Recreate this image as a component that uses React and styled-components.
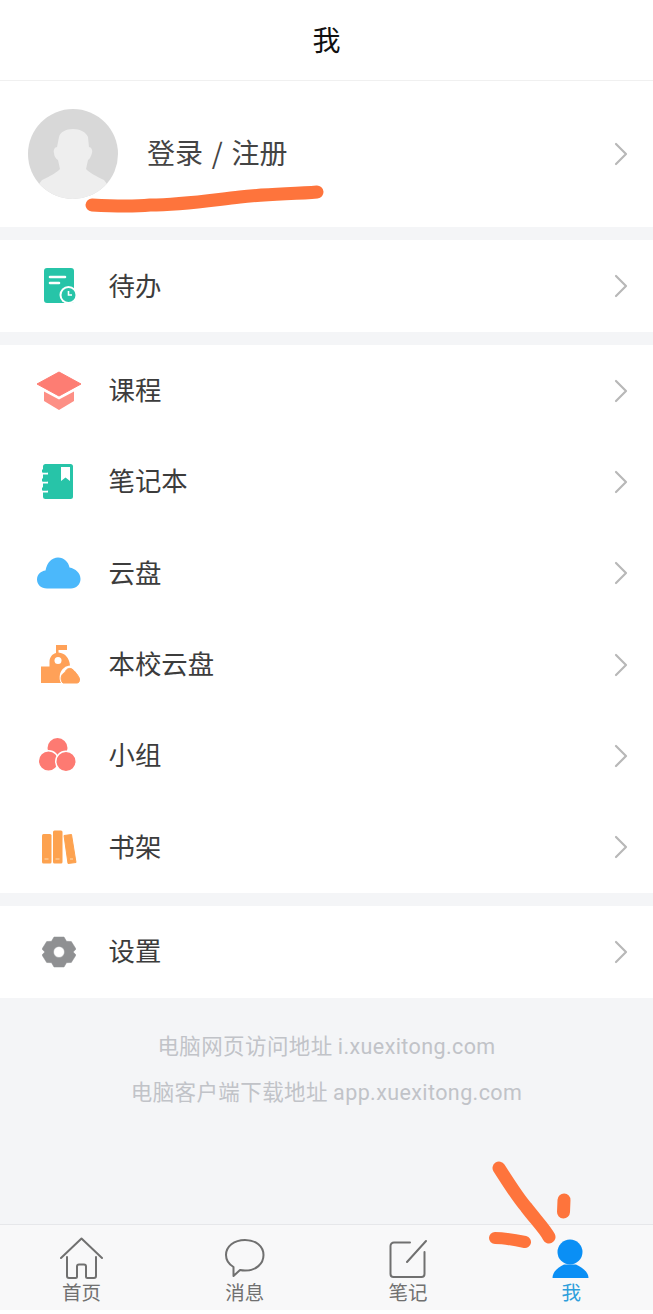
import React from 'react';
import styled, { createGlobalStyle } from 'styled-components';

const Global = createGlobalStyle`
  html, body { margin: 0; padding: 0; background: #fff; }
  body { font-family: "Liberation Sans", "Noto Sans CJK SC", sans-serif; }
`;
const Page = styled.div`
  position: relative; width: 653px; height: 1314px; overflow: hidden;
  display: flex; flex-direction: column; background: #f4f5f7;
`;
const Header = styled.header`
  height: 78px; flex: none; background: #fff; border-bottom: 1px solid #f0f0f0;
  display: flex; align-items: center; justify-content: center; padding-bottom: 2px;
  font-size: 28px; color: #111; font-family: "Noto Sans CJK SC", sans-serif;
`;
const Profile = styled.section`
  height: 146px; flex: none; background: #fff; display: flex; align-items: center;
  padding: 0 25px 0 28px; box-sizing: border-box;
`;
const Avatar = styled.svg`
  width: 90px; height: 90px; flex: none; margin-top: -1px;
`;
const LoginText = styled.span`
  margin-left: 29px; flex: 1; font-size: 28px; color: #444; word-spacing: 2.500px;
  font-family: "Noto Sans CJK SC", sans-serif; padding-bottom: 5px;
  white-space: pre;
`;
const Group = styled.section`
  background: #fff; margin-top: ${p => p.$gap}px; flex: none;
`;
const Row = styled.div`
  height: ${p => p.$h}px; display: flex; align-items: center; padding: 0 25px 0 36px; box-sizing: border-box;
`;
const IconBox = styled.span`
  width: 46px; height: 46px; flex: none; display: flex; align-items: center; justify-content: center;
  svg { display: block; }
`;
const Label = styled.span`
  margin-left: 26.500px; flex: 1; font-size: 26.400px; color: #3c3c3c; padding-bottom: 4px;
  font-family: "Noto Sans CJK SC", sans-serif;
`;
const Footer = styled.footer`
  flex: 1; display: flex; flex-direction: column; align-items: center; padding-top: 32px; gap: 15.500px;
`;
const FootLine = styled.div`
  font-size: 21.500px; line-height: 29px; color: #c1c3c8; letter-spacing: 0.400px;
  font-family: "Noto Sans CJK SC", "Liberation Sans", sans-serif;
  span { font-family: "Roboto", sans-serif; }
`;
const TabBar = styled.nav`
  height: 86px; flex: none; background: #f8f8f9; border-top: 1px solid #e6e7ea;
  display: grid; grid-template-columns: repeat(4, 163.250px); margin-bottom: 3px;
`;
const BottomEdge = styled.div`
  position: absolute; left: 0; right: 0; bottom: 0; height: 4px; background: #fff;
`;
const Tab = styled.div`
  display: flex; flex-direction: column; align-items: center; padding-top: 12px; height: 86px; box-sizing: border-box;
`;
const TabIcon = styled.svg` width: 44px; height: 44px; flex: none; display: block; `;
const TabLabel = styled.span`
  font-size: 19.500px; line-height: 24px; margin-top: -1px; color: ${p => p.$active ? '#2f9fdc' : '#707070'};
  font-family: "Noto Sans CJK SC", sans-serif;
`;
const Strokes = styled.svg`
  position: absolute; left: 0; top: 0; width: 653px; height: 1314px; pointer-events: none;
`;

const Chevron = () => (
  <svg width="14" height="24" viewBox="0 0 14 24" fill="none" stroke="#b8b8b8" strokeWidth="2.200" strokeLinecap="round" strokeLinejoin="round">
    <path d="M2 2 12 12 2 22" />
  </svg>
);

const Todo = () => (
  <svg width="34" height="36" viewBox="0 0 34 36" style={{ marginLeft: 4 }}>
    <rect x="0" y="0" width="30" height="35" rx="3" fill="#27c4a8" />
    <path d="M6 9h15M6 15h9" stroke="#fff" strokeWidth="2.600" strokeLinecap="round" />
    <circle cx="24.500" cy="27" r="9" fill="#fff" />
    <circle cx="24.500" cy="27" r="7" fill="#27c4a8" />
    <path d="M24.500 23v4h3.500" fill="none" stroke="#fff" strokeWidth="1.600" />
  </svg>
);
const Course = () => (
  <svg width="46" height="40" viewBox="0 0 46 40">
    <path d="M23 1 45 13 23 25 1 13Z" fill="#fd7d73" stroke="#fd7d73" strokeLinejoin="round" strokeWidth="1" />
    <path d="M8 20.500 23 28.500 38 20.500V30L23 39 8 30Z" fill="#fd8f85" />
  </svg>
);
const Notebook = () => (
  <svg width="32" height="36" viewBox="0 0 32 36" style={{ marginRight: 3 }}>
    <rect x="1" y="0" width="30" height="35" rx="2.500" fill="#27c4a8" />
    <path d="M0 9.500h6M0 18.500h6M0 27.500h6" stroke="#fff" strokeWidth="2.200" />
    <path d="M0 7h5M0 16h5M0 25h5" stroke="#27c4a8" strokeWidth="2.800" strokeLinecap="round" />
    <path d="M19 3h9v14l-4.500-3.500L19 17Z" fill="#fff" />
  </svg>
);
const Cloud = () => (
  <svg width="44" height="32" viewBox="0 0 44 32">
    <path d="M10 31.500C4 31.500 0 27.500 0 22.500 0 17.500 4 14 8.500 13.500 10 5.500 15 0.500 21 0.500 27 0.500 31.500 5 32.500 10.500 38.500 11.500 43.500 16 43.500 22 43.500 27.500 39 31.500 34 31.500Z" fill="#4bb8fb" />
  </svg>
);
const School = () => (
  <svg width="40" height="39" viewBox="0 0 40 39" style={{ marginLeft: 2 }}>
    <path d="M16 0h11v5H18.500V7.500C25 8 29.500 13 30 20.500 26 20.500 21.500 24 20 29 19.300 32 19.500 36 21 38H1V21.500H9.500V17C9.500 12.500 12 9 16 8Z" fill="#ffa158" />
    <circle cx="18" cy="15.500" r="3.500" fill="#fff" />
    <path d="M23 38C20 35.500 20.500 29 25 27.500 26 24 29 22.500 32 24 35 26 38.500 31 39.500 33.500 40 36.500 38.500 38 37 38Z" fill="#ffa158" stroke="#ffa158" strokeLinejoin="round" />
  </svg>
);
const Team = () => (
  <svg width="38" height="36" viewBox="0 0 38 36" style={{ marginRight: 2 }}>
    <circle cx="18.500" cy="10" r="10" fill="#fd7a72" />
    <circle cx="9.500" cy="23" r="10.250" fill="#fd7a72" stroke="#fff" strokeWidth="1.500" />
    <circle cx="27" cy="23.500" r="10.250" fill="#fd7a72" stroke="#fff" strokeWidth="1.500" />
  </svg>
);
const Shelf = () => (
  <svg width="36" height="34" viewBox="0 0 36 34">
    <rect x="1" y="4" width="9.500" height="29.500" rx="1.500" fill="#fda24f" />
    <rect x="12" y="0.500" width="9.500" height="33" rx="1.500" fill="#fda24f" />
    <path d="M23 5.500 30.500 4.500 35 32.500 27 33.500Z" fill="#fda24f" stroke="#fda24f" strokeLinejoin="round" />
    <path d="M3.500 29h4M14.500 29h4M29 29h3" stroke="#ffd9b0" strokeWidth="1.200" />
  </svg>
);
const Gear = () => (
  <svg width="34" height="32" viewBox="0 0 34 32">
    <path fillRule="evenodd" fill="#8f9092" d="M12 1h10l2.500 4.300 4.800 .2L34 13l-2.800 3 2.800 3-4.700 7.500-4.800 .2L22 31H12l-2.500-4.300-4.800-.2L0 19l2.800-3L0 13l4.700-7.500 4.800-.2Z M17 10.500a5.500 5.500 0 1 0 0 11 5.500 5.500 0 0 0 0-11Z" stroke="#8f9092" strokeWidth="0.500" strokeLinejoin="round" />
  </svg>
);

const groups = [
  { gap: 13, h: 92, items: [['待办', <Todo />]] },
  { gap: 13, h: 91.33, items: [['课程', <Course />], ['笔记本', <Notebook />], ['云盘', <Cloud />], ['本校云盘', <School />], ['小组', <Team />], ['书架', <Shelf />]] },
  { gap: 13, h: 92, items: [['设置', <Gear />]] },
];

const tabs = [
  ['首页', <path d="M1 21 21.500 1.500 42 21M7 20V39a2 2 0 0 0 2 2h6.500a1.500 1.500 0 0 0 1.500-1.500V29.500A2 2 0 0 1 19 27.500h5a2 2 0 0 1 2 2V39.500A1.500 1.500 0 0 0 27.500 41h6.500a2 2 0 0 0 2-2V20" />],
  ['消息', <path d="M22 3C33 3 40.500 9.500 40.500 18 40.500 27 33 33.500 22 33.500 20 33.500 18.500 33.300 17 33L10.500 39 10.500 30C5.500 27 3 23 3 18 3 9.500 11 3 22 3Z" />],
  ['笔记', <path d="M24 5.500H8A3.500 3.500 0 0 0 4.500 9V37A3 3 0 0 0 7.500 40H35.500A3 3 0 0 0 38.500 37V15M40 4 21 25" />],
];

export default function App() {
  return (
    <Page>
      <Global />
      <Header>我</Header>
      <Profile>
        <Avatar viewBox="0 0 90 90">
          <defs><clipPath id="av"><circle cx="45" cy="45" r="45" /></clipPath></defs>
          <circle cx="45" cy="45" r="45" fill="#d8d8d8" />
          <g clipPath="url(#av)" fill="#eeeeee">
            <path d="M31 28C32 23 38 20 45 20 52 20 58 23 60 28L61 38C63 38 65 41 64 44 63 47 62 50 60 51L58 60C61 63 67 67 76 71L90 90H0L14 71C23 67 29 63 32 60L30 51C28 50 26 47 26 44 25 41 27 38 29 38Z" />
          </g>
        </Avatar>
        <LoginText>登录 / 注册</LoginText>
        <Chevron />
      </Profile>
      {groups.map((g, i) => (
        <Group key={i} $gap={g.gap}>
          {g.items.map(([text, icon]) => (
            <Row key={text} $h={g.h}>
              <IconBox>{icon}</IconBox>
              <Label>{text}</Label>
              <Chevron />
            </Row>
          ))}
        </Group>
      ))}
      <Footer>
        <FootLine>电脑网页访问地址 <span>i.xuexitong.com</span></FootLine>
        <FootLine>电脑客户端下载地址 <span>app.xuexitong.com</span></FootLine>
      </Footer>
      <TabBar>
        {tabs.map(([t, d]) => (
          <Tab key={t}>
            <TabIcon viewBox="0 0 44 44" fill="none" stroke="#707070" strokeWidth="2" strokeLinecap="round" strokeLinejoin="round">{d}</TabIcon>
            <TabLabel>{t}</TabLabel>
          </Tab>
        ))}
        <Tab>
          <TabIcon viewBox="0 0 44 44" fill="#0a8ff5">
            <circle cx="21" cy="15" r="12.500" />
            <path d="M3.500 41C3.500 35 9 30 15 27.500L27 27.500C33 30 39.500 35 39.500 41Z" />
          </TabIcon>
          <TabLabel $active>我</TabLabel>
        </Tab>
      </TabBar>
      <BottomEdge />
      <Strokes viewBox="0 0 653 1314" fill="none" stroke="#fe743c" strokeLinecap="round" strokeLinejoin="round">
        <path d="M92 205C110 206 130 207 150 205 180 205 205 201 240 197 265 194 295 194 317 192" strokeWidth="13" />
        <path d="M499 1168C510 1185 518 1198 526 1207 535 1219 545 1229 549 1237" strokeWidth="13" />
        <path d="M564 1200 563.500 1212" strokeWidth="13" />
        <path d="M495 1238C505 1238 515 1240 525 1242" strokeWidth="12" />
      </Strokes>
    </Page>
  );
}
